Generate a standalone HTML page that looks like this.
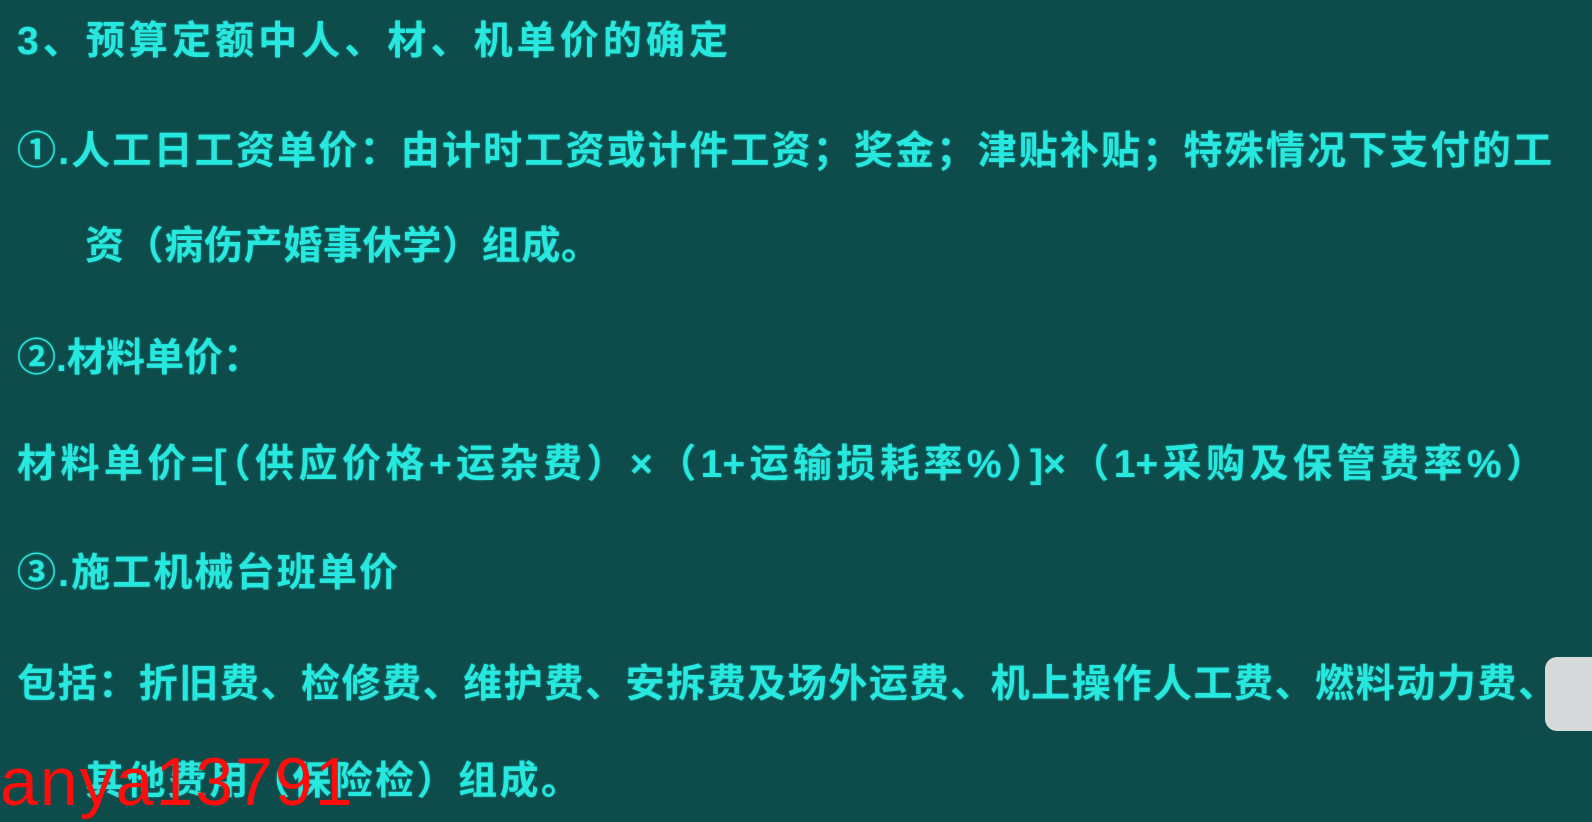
<!DOCTYPE html>
<html><head><meta charset="utf-8"><style>
body{margin:0;width:1592px;height:818px;background:#0e4b4b;overflow:hidden;position:relative;font-family:"Liberation Sans","Noto Sans CJK SC",sans-serif;}
.l{position:absolute;color:#26e8de;font-weight:bold;font-size:39px;line-height:44px;white-space:nowrap;text-align:justify;text-align-last:justify;text-shadow:0 0 2px rgba(40,230,220,.5);}
.wm{position:absolute;left:0;top:742px;color:#ff0c0c;font-size:68px;font-family:"Liberation Sans",sans-serif;letter-spacing:2px;line-height:80px;}
.box{position:absolute;left:1545px;top:657px;width:60px;height:74px;background:#d6dada;border-radius:12px;}
</style></head><body>
<div class="l" style="left:17px;top:20px;width:711px">3、预算定额中人、材、机单价的确定</div>
<div class="l" style="left:17px;top:130px;width:1535px">①.人工日工资单价：由计时工资或计件工资；奖金；津贴补贴；特殊情况下支付的工</div>
<div class="l" style="left:85px;top:225px;width:515px">资（病伤产婚事休学）组成。</div>
<div class="l" style="left:17px;top:337px;width:245px">②.材料单价：</div>
<div class="l" style="left:17px;top:443px;width:1528px">材料单价=[（供应价格+运杂费）×（1+运输损耗率%）]×（1+采购及保管费率%）</div>
<div class="l" style="left:17px;top:552px;width:381px">③.施工机械台班单价</div>
<div class="l" style="left:17px;top:663px;width:1540px">包括：折旧费、检修费、维护费、安拆费及场外运费、机上操作人工费、燃料动力费、</div>
<div class="l" style="left:85px;top:760px;width:495px">其他费用（保险检）组成。</div>
<div class="box"></div>
<div class="wm">anya13791</div>
</body></html>
